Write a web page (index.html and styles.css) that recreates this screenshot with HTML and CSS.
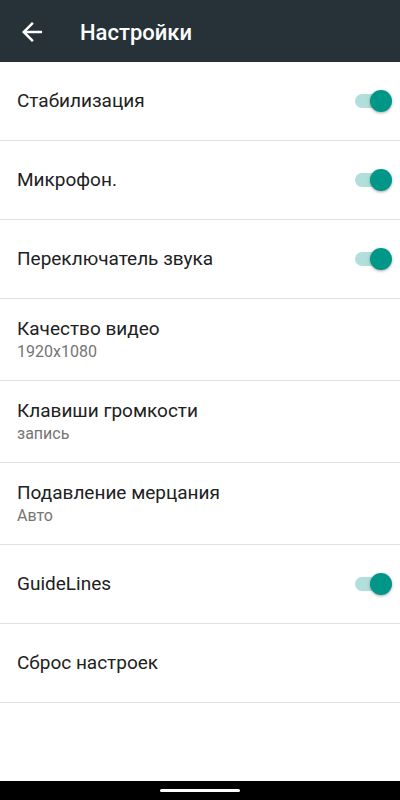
FILE: index.html
```html
<!DOCTYPE html>
<html lang="ru">
<head>
  <meta charset="UTF-8" />
  <meta name="viewport" content="width=device-width, initial-scale=1.0" />
  <title>Настройки</title>
  <link rel="stylesheet" href="styles.css">
</head>
<body>
<div class="screen">
  <div class="toolbar">
    <svg class="back" viewBox="0 0 24 24" width="30" height="30">
      <path fill="#fff" d="M20 11H7.83l5.59-5.59L12 4l-8 8 8 8 1.41-1.41L7.83 13H20v-2z"/>
    </svg>
    <h1>Настройки</h1>
  </div>

  <div class="list">
    <div class="row">
      <span class="title">Стабилизация</span>
      <div class="switch"><div class="track"></div><div class="thumb"></div></div>
    </div>
    <div class="row">
      <span class="title">Микрофон.</span>
      <div class="switch"><div class="track"></div><div class="thumb"></div></div>
    </div>
    <div class="row">
      <span class="title">Переключатель звука</span>
      <div class="switch"><div class="track"></div><div class="thumb"></div></div>
    </div>
    <div class="row two-line">
      <span class="title">Качество видео</span>
      <span class="summary">1920x1080</span>
    </div>
    <div class="row two-line">
      <span class="title">Клавиши громкости</span>
      <span class="summary">запись</span>
    </div>
    <div class="row two-line">
      <span class="title">Подавление мерцания</span>
      <span class="summary">Авто</span>
    </div>
    <div class="row">
      <span class="title">GuideLines</span>
      <div class="switch"><div class="track"></div><div class="thumb"></div></div>
    </div>
    <div class="row">
      <span class="title">Сброс настроек</span>
    </div>
  </div>

  <div class="navbar"><div class="home"></div></div>
</div>
</body>
</html>
```

FILE: styles.css
```css
body {
  margin: 0;
  font-family: Roboto, 'Noto Sans', sans-serif;
  background: #fff;
}
.screen {
  width: 400px;
  height: 800px;
  display: flex;
  flex-direction: column;
}
.toolbar {
  height: 62px;
  background: #263238;
  display: flex;
  align-items: center;
  flex-shrink: 0;
}
.back {
  margin-left: 17px;
  margin-top: 2px;
}
.toolbar h1 {
  margin: 2px 0 0 33px;
  font-size: 22px;
  font-weight: 500;
  color: #fff;
}
.list {
  flex: 1;
}
.row {
  height: 78px;
  border-bottom: 1px solid #e0e0e0;
  display: flex;
  align-items: center;
  justify-content: space-between;
  padding: 0 8px 0 17px;
}
.row.two-line {
  height: 81px;
  flex-direction: column;
  align-items: flex-start;
  justify-content: center;
}
.title {
  font-size: 19px;
  line-height: 22px;
  color: #212121;
}
.summary {
  margin-top: 2px;
  font-size: 16px;
  line-height: 20px;
  color: #757575;
}
.switch {
  position: relative;
  width: 37px;
  height: 24px;
}
.track {
  position: absolute;
  left: 0;
  top: 5px;
  width: 30px;
  height: 14px;
  border-radius: 7px;
  background: #b2dfdb;
}
.thumb {
  position: absolute;
  right: 0;
  top: 1px;
  width: 22px;
  height: 22px;
  border-radius: 50%;
  background: #009688;
  box-shadow: 0 1px 3px rgba(0,0,0,0.35);
}
.navbar {
  height: 19px;
  background: #000;
  flex-shrink: 0;
  display: flex;
  justify-content: center;
  align-items: center;
}
.home {
  width: 80px;
  height: 3px;
  border-radius: 2px;
  background: #fff;
}
```
